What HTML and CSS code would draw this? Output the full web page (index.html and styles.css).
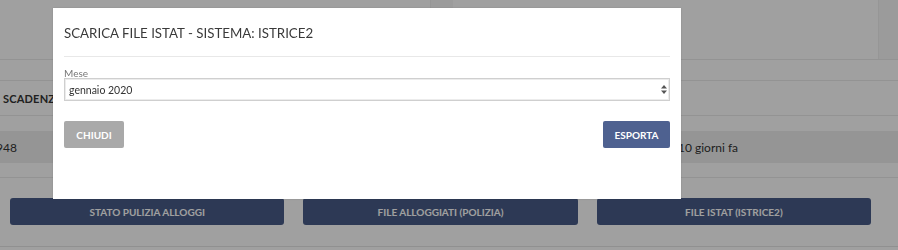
FILE: index.html
```html
<!DOCTYPE html>
<html lang="it">
<head>
  <meta charset="UTF-8" />
  <title>Scarica file ISTAT</title>
  <link rel="stylesheet" href="styles.css">
</head>
<body>

  <!-- PAGE UNDER THE MODAL -->
  <div class="page">
    <div class="cards">
      <div class="card"></div>
      <div class="card"></div>
    </div>

    <div class="table">
      <div class="row head"></div>
      <div class="row head2"><span class="cell th">SCADENZA</span></div>
      <div class="row gap"></div>
      <div class="row striped">
        <span class="cell first">948</span>
        <span class="cell last">10 giorni fa</span>
      </div>
      <div class="row gap end"></div>
    </div>

    <div class="actions">
      <button class="btn-main">STATO PULIZIA ALLOGGI</button>
      <button class="btn-main">FILE ALLOGGIATI (POLIZIA)</button>
      <button class="btn-main">FILE ISTAT (ISTRICE2)</button>
    </div>
  </div>

  <div class="overlay"></div>

  <!-- MODAL -->
  <div class="modal">
    <div class="modal-header">SCARICA FILE ISTAT - SISTEMA: ISTRICE2</div>
    <div class="modal-body">
      <label class="field-label">Mese</label>
      <div class="select">
        <span>gennaio 2020</span>
        <svg class="arrows" width="6" height="9" viewBox="0 0 6 9">
          <path d="M3 0 L6 3.6 H0 Z" fill="#555"/>
          <path d="M3 9 L6 5.4 H0 Z" fill="#555"/>
        </svg>
      </div>
      <div class="modal-footer">
        <button class="btn btn-close">CHIUDI</button>
        <button class="btn btn-export">ESPORTA</button>
      </div>
    </div>
  </div>

</body>
</html>
```

FILE: styles.css
```css
body {
  font-family: Lato, 'Open Sans', sans-serif;
  margin: 0;
  background: #fff;
  overflow: hidden;
}

.page {
  width: 898px;
  height: 250px;
  background: #fff;
}

.cards {
  display: flex;
  gap: 22px;
  height: 59px;
  background: #f8f8f8;
}

.card {
  background: #fff;
  width: 430px;
  border-right: 1px solid #f0f0f0;
}

.card + .card {
  width: 425px;
}

.table {
  border-top: 1px solid #ebebeb;
}

.row {
  display: flex;
  align-items: center;
  font-size: 11px;
  color: #333;
}

.head {
  height: 20px;
  border-bottom: 1px solid #ebebeb;
}

.head2 {
  height: 34px;
  border-bottom: 1px solid #ebebeb;
}

.gap {
  height: 15px;
}

.end {
  height: 14px;
  border-bottom: 1px solid #ebebeb;
}

.striped {
  height: 32px;
  background: #eeeeee;
}

.th {
  font-weight: bold;
  padding-left: 3px;
  letter-spacing: 0.2px;
}

.first {
  margin-left: -4px;
  font-size: 12px;
}

.last {
  margin-left: auto;
  width: 220px;
  font-size: 12px;
}

.actions {
  display: grid;
  grid-template-columns: 1fr 1fr 1fr;
  gap: 19px;
  padding: 20px 27px 21px 10px;
  border-bottom: 1px solid #e6e6e6;
}

.btn-main {
  height: 27px;
  border: none;
  border-radius: 3px;
  background: #495c88;
  color: #fff;
  font-family: Lato, sans-serif;
  font-size: 10px;
  font-weight: bold;
}

.overlay {
  position: fixed;
  left: 0;
  top: 0;
  width: 100%;
  height: 100%;
  background: rgba(0,0,0,0.373);
}

.modal {
  position: fixed;
  left: 53px;
  top: 8px;
  width: 628px;
  height: 191px;
  background: #fff;
  box-shadow: 0 0 2px rgba(0,0,0,0.15);
  box-sizing: border-box;
  padding: 0 11px;
}

.modal-header {
  font-size: 13.3px;
  color: #3a3a3a;
  padding: 19px 0 16px;
  border-bottom: 1px solid #e8e8e8;
  line-height: 13px;
}

.modal-body {
  padding-top: 11px;
}

.field-label {
  display: block;
  font-size: 10px;
  color: #777;
  line-height: 10px;
}

.select {
  display: flex;
  align-items: center;
  justify-content: space-between;
  height: 23px;
  box-sizing: border-box;
  border: 1px solid #cfcfcf;
  box-shadow: inset 0 0 0 1px #ececec;
  padding: 0 2px 0 4px;
  font-size: 10.5px;
  color: #333;
}

.modal-footer {
  display: flex;
  justify-content: space-between;
  margin-top: 20px;
}

.btn {
  height: 27px;
  border: none;
  border-radius: 2px;
  color: #fff;
  font-family: Lato, sans-serif;
  font-size: 10px;
  font-weight: bold;
}

.btn-close {
  width: 60px;
  background: #a9a9a9;
}

.btn-export {
  width: 67px;
  background: #4e6190;
}
```
